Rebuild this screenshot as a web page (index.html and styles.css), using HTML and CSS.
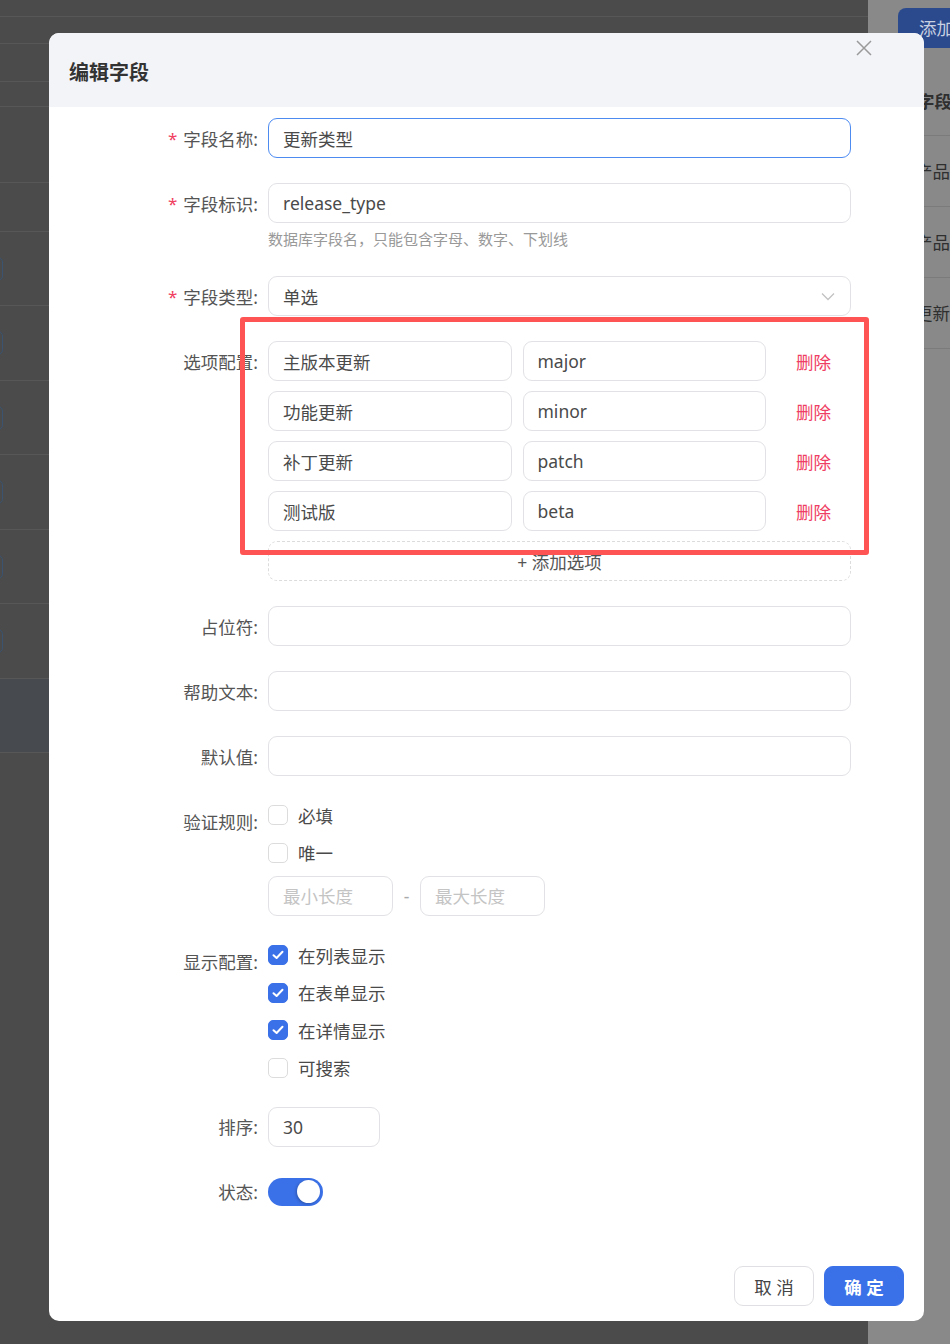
FILE: index.html
```html
<!DOCTYPE html>
<html lang="zh-CN">
<head>
<meta charset="utf-8">
<title>编辑字段</title>
<link rel="stylesheet" href="styles.css">
</head>
<body>
<div class="page">
  <div class="page-main">
    <div class="bg-row h17"></div>
    <div class="bg-row h27"></div>
    <div class="bg-row h38"></div>
    <div class="bg-row h25"></div>
    <div class="bg-row h76"></div>
    <div class="bg-row h49"></div>
    <div class="bg-row h74"><span class="bg-btn"></span></div>
    <div class="bg-row h75"><span class="bg-btn"></span></div>
    <div class="bg-row h74"><span class="bg-btn"></span></div>
    <div class="bg-row h75"><span class="bg-btn"></span></div>
    <div class="bg-row h74"><span class="bg-btn"></span></div>
    <div class="bg-row h75"><span class="bg-btn"></span></div>
    <div class="bg-row h74 hover"></div>
  </div>
  <div class="side">
    <div class="side-btn">添加</div>
    <div class="side-row head">字段</div>
    <div class="side-row">产品</div>
    <div class="side-row">产品</div>
    <div class="side-row">更新</div>
  </div>
</div>

<div class="modal">
  <div class="modal-head">
    <div class="modal-title">编辑字段</div>
    <svg class="modal-close" width="16" height="16" viewBox="0 0 16 16"><path d="M1 1L15 15M15 1L1 15" stroke="#9a9a9a" stroke-width="1.5" fill="none"/></svg>
  </div>

  <div class="modal-body">
    <div class="item">
      <div class="label"><span class="req">*</span>字段名称:</div>
      <div class="ctrl"><input class="input focus" value="更新类型"></div>
    </div>

    <div class="item">
      <div class="label"><span class="req">*</span>字段标识:</div>
      <div class="ctrl">
        <input class="input" value="release_type">
        <div class="help">数据库字段名，只能包含字母、数字、下划线</div>
      </div>
    </div>

    <div class="item">
      <div class="label"><span class="req">*</span>字段类型:</div>
      <div class="ctrl">
        <div class="input select"><span>单选</span>
          <svg class="chev" width="14" height="9" viewBox="0 0 14 9"><path d="M1 1.5L7 7.5L13 1.5" stroke="#c2c2c2" stroke-width="1.3" fill="none"/></svg>
        </div>
      </div>
    </div>

    <div class="item">
      <div class="label">选项配置:</div>
      <div class="ctrl options">
        <div class="opt-row">
          <input class="input" value="主版本更新">
          <input class="input" value="major">
          <span class="del">删除</span>
        </div>
        <div class="opt-row">
          <input class="input" value="功能更新">
          <input class="input" value="minor">
          <span class="del">删除</span>
        </div>
        <div class="opt-row">
          <input class="input" value="补丁更新">
          <input class="input" value="patch">
          <span class="del">删除</span>
        </div>
        <div class="opt-row">
          <input class="input" value="测试版">
          <input class="input" value="beta">
          <span class="del">删除</span>
        </div>
        <div class="add-btn">+ 添加选项</div>
      </div>
    </div>

    <div class="item">
      <div class="label">占位符:</div>
      <div class="ctrl"><input class="input"></div>
    </div>

    <div class="item">
      <div class="label">帮助文本:</div>
      <div class="ctrl"><input class="input"></div>
    </div>

    <div class="item">
      <div class="label">默认值:</div>
      <div class="ctrl"><input class="input"></div>
    </div>

    <div class="item">
      <div class="label">验证规则:</div>
      <div class="ctrl stack">
        <div class="cb-row"><span class="cb"></span><span class="cb-text">必填</span></div>
        <div class="cb-row"><span class="cb"></span><span class="cb-text">唯一</span></div>
        <div class="range">
          <input class="input small" placeholder="最小长度">
          <span class="dash">-</span>
          <input class="input small" placeholder="最大长度">
        </div>
      </div>
    </div>

    <div class="item">
      <div class="label">显示配置:</div>
      <div class="ctrl stack">
        <div class="cb-row"><span class="cb on"><svg width="12" height="10" viewBox="0 0 12 10"><path d="M1.5 5.2L4.6 8L10.5 1.8" stroke="#fff" stroke-width="2" fill="none" stroke-linecap="round" stroke-linejoin="round"/></svg></span><span class="cb-text">在列表显示</span></div>
        <div class="cb-row"><span class="cb on"><svg width="12" height="10" viewBox="0 0 12 10"><path d="M1.5 5.2L4.6 8L10.5 1.8" stroke="#fff" stroke-width="2" fill="none" stroke-linecap="round" stroke-linejoin="round"/></svg></span><span class="cb-text">在表单显示</span></div>
        <div class="cb-row"><span class="cb on"><svg width="12" height="10" viewBox="0 0 12 10"><path d="M1.5 5.2L4.6 8L10.5 1.8" stroke="#fff" stroke-width="2" fill="none" stroke-linecap="round" stroke-linejoin="round"/></svg></span><span class="cb-text">在详情显示</span></div>
        <div class="cb-row"><span class="cb"></span><span class="cb-text">可搜索</span></div>
      </div>
    </div>

    <div class="item">
      <div class="label">排序:</div>
      <div class="ctrl"><input class="input sort" value="30"></div>
    </div>

    <div class="item">
      <div class="label">状态:</div>
      <div class="ctrl switch-wrap"><span class="switch"><span class="knob"></span></span></div>
    </div>
  </div>

  <div class="modal-foot">
    <button class="btn">取 消</button>
    <button class="btn primary">确 定</button>
  </div>
</div>

<div class="annot"></div>
</body>
</html>
```

FILE: styles.css
```css
* { box-sizing: border-box; }

html, body {
  margin: 0;
  padding: 0;
}

body {
  width: 950px;
  height: 1344px;
  overflow: hidden;
  position: relative;
  font-family: "Noto Sans", "Noto Sans CJK SC", sans-serif;
  font-size: 17.5px;
  color: #333;
  background: #4b4b4b;
}

/* ---------- dimmed page behind ---------- */
.page {
  display: flex;
  height: 1344px;
}

.page-main {
  flex: 0 0 868px;
  background: #4b4b4b;
}

.bg-row {
  border-bottom: 1px solid #575757;
  display: flex;
  align-items: center;
}
.bg-row.h17 { height: 17px; }
.bg-row.h27 { height: 27px; }
.bg-row.h38 { height: 38px; }
.bg-row.h25 { height: 25px; }
.bg-row.h76 { height: 76px; }
.bg-row.h49 { height: 49px; }
.bg-row.h74 { height: 74px; }
.bg-row.h75 { height: 75px; }
.bg-row.hover { background: #474b50; }

.bg-btn {
  width: 24px;
  height: 24px;
  margin-left: -21px;
  border: 1.5px solid #3b536f;
  border-radius: 5px;
}

.side {
  flex: 1;
  background: #898989;
  padding-top: 8px;
  overflow: hidden;
}

.side-btn {
  margin-left: 30px;
  width: 110px;
  height: 40px;
  border-radius: 8px;
  background: #2b4a8e;
  color: #c9d0e0;
  line-height: 40px;
  padding-left: 21px;
  white-space: nowrap;
}

.side-row {
  height: 71px;
  line-height: 70px;
  border-bottom: 1px solid #7b7b7b;
  padding-left: 47px;
  white-space: nowrap;
  color: #2f2f2f;
}
.side-row.head {
  margin-top: 19px;
  height: 69px;
  line-height: 68px;
  font-weight: 700;
  padding-left: 49px;
}

/* ---------- modal ---------- */
.modal {
  position: absolute;
  left: 49px;
  top: 33px;
  width: 875px;
  height: 1288px;
  background: #fff;
  border-radius: 10px;
  overflow: hidden;
  display: flex;
  flex-direction: column;
}

.modal-head {
  position: relative;
  height: 74px;
  background: #f3f4f8;
  padding: 0 20px;
  display: flex;
  align-items: center;
  flex-shrink: 0;
}

.modal-title {
  font-size: 20px;
  font-weight: 700;
  color: #333;
  margin-top: 3px;
}

.modal-close {
  position: absolute;
  left: 807px;
  top: 7px;
}

.modal-body {
  flex: 1;
  padding: 11px 20px 0;
}

.item {
  display: grid;
  grid-template-columns: 199px 583px;
  margin-bottom: 25px;
}

.label {
  height: 40px;
  display: flex;
  align-items: center;
  justify-content: flex-end;
  padding-right: 10px;
  color: #555;
  white-space: nowrap;
}

.req {
  color: #f0405f;
  margin-right: 6px;
  font-size: 17px;
}

.ctrl { min-width: 0; }

.input {
  display: flex;
  align-items: center;
  width: 100%;
  height: 40px;
  margin: 0;
  padding: 0 14px;
  border: 1px solid #e2e2e6;
  border-radius: 9px;
  background: #fff;
  font: inherit;
  color: #4a4a4a;
  outline: none;
}
.input::placeholder { color: #c4c4c4; }
.input.focus { border-color: #4d8bf1; }

.help {
  margin-top: 6px;
  line-height: 20px;
  font-size: 15px;
  color: #999;
  margin-bottom: 2px;
}

.select {
  justify-content: space-between;
}
.chev { margin-right: 1px; }

.options {
  display: flex;
  flex-direction: column;
  gap: 10px;
}

.opt-row {
  display: grid;
  grid-template-columns: 1fr 1fr 74px;
  gap: 11px;
  align-items: center;
}

.del {
  color: #ef3e63;
  padding-left: 19px;
  white-space: nowrap;
}

.add-btn {
  height: 40px;
  border: 1px dashed #dcdcdc;
  border-radius: 9px;
  display: flex;
  align-items: center;
  justify-content: center;
  color: #555;
}

.stack {
  display: flex;
  flex-direction: column;
  gap: 9.5px;
}

.cb-row {
  height: 28px;
  display: flex;
  align-items: center;
  gap: 10px;
}

.cb {
  width: 20px;
  height: 20px;
  border: 1px solid #dcdcdc;
  border-radius: 5px;
  display: flex;
  align-items: center;
  justify-content: center;
  flex-shrink: 0;
}
.cb.on {
  background: #3b71e8;
  border-color: #3b71e8;
}

.cb-text { color: #4a4a4a; }

.range {
  display: flex;
  align-items: center;
}
.input.small { width: 125px; }
.dash {
  width: 27px;
  text-align: center;
  color: #aaa;
}

.input.sort { width: 112px; }

.switch-wrap {
  height: 40px;
  display: flex;
  align-items: center;
}

.switch {
  width: 55px;
  height: 28px;
  border-radius: 14px;
  background: #3b71e8;
  display: flex;
  align-items: center;
  justify-content: flex-end;
  padding-right: 3px;
}

.knob {
  width: 23px;
  height: 23px;
  border-radius: 50%;
  background: #fff;
  box-shadow: -1px 1px 3px rgba(0, 0, 0, 0.25);
}

.modal-foot {
  display: flex;
  justify-content: flex-end;
  gap: 10px;
  padding: 0 20px 15px;
}

.btn {
  width: 80px;
  height: 40px;
  border: 1px solid #e0e0e4;
  border-radius: 9px;
  background: #fff;
  font: inherit;
  color: #444;
  padding: 0;
}
.btn.primary {
  background: #3b71e8;
  border-color: #3b71e8;
  color: #fff;
  font-weight: 700;
}

/* ---------- annotation box ---------- */
.annot {
  position: absolute;
  left: 240px;
  top: 317px;
  width: 629px;
  height: 238px;
  border: 5px solid #ff5454;
  border-radius: 3px;
  pointer-events: none;
}
```
